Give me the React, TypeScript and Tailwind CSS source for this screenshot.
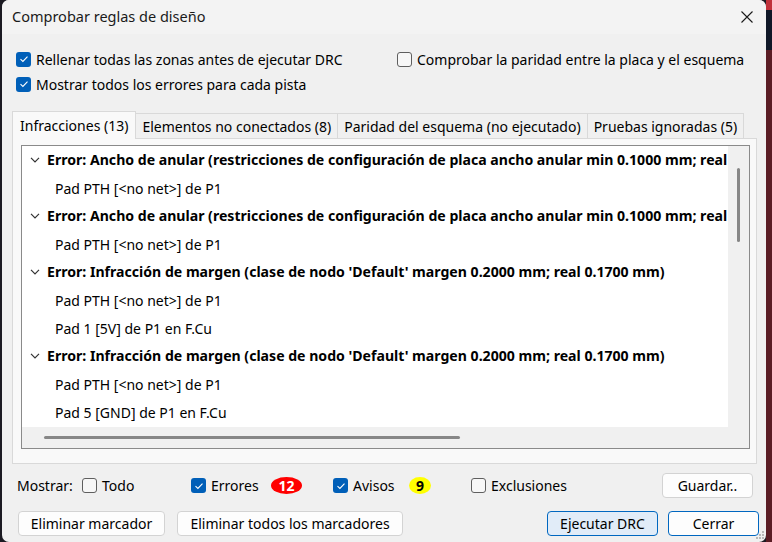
import React from "react";

function Check({ checked }: { checked: boolean }) {
  if (checked) {
    return (
      <span className="w-[15px] h-[15px] rounded-[3px] bg-[#005fb8] flex items-center justify-center shrink-0">
        <svg width="10" height="8" viewBox="0 0 10 8">
          <path d="M1.5 4.2 L3.9 6.4 L8.5 1.6" fill="none" stroke="#ffffff" strokeWidth="1.1" />
        </svg>
      </span>
    );
  }
  return <span className="w-[15px] h-[15px] rounded-[3px] border border-[#5f5f5f] bg-[#f7f7f7] shrink-0" />;
}

function CheckItem({ checked, label }: { checked: boolean; label: string }) {
  return (
    <div className="flex items-center gap-[5px] h-[20px]">
      <Check checked={checked} />
      <span>{label}</span>
    </div>
  );
}

function Chevron() {
  return (
    <svg width="10" height="6" viewBox="0 0 10 6" className="shrink-0">
      <path d="M1 0.8 L5 4.8 L9 0.8" fill="none" stroke="#333333" strokeWidth="1.2" />
    </svg>
  );
}

function ErrRow({ text }: { text: string }) {
  return (
    <div className="h-[28px] flex items-center gap-[7px] pl-[8px] whitespace-nowrap">
      <Chevron />
      <span className="font-bold text-[14.1px]">{text}</span>
    </div>
  );
}

function SubRow({ text }: { text: string }) {
  return <div className="h-[28px] flex items-center pl-[33px] whitespace-nowrap">{text}</div>;
}

function Btn({ label, w, variant }: { label: string; w: string; variant?: "primary" | "focus" }) {
  const base = "h-[25px] rounded-[4px] flex items-center justify-center border ";
  const cls =
    variant === "primary"
      ? "bg-[#e1ecf8] border-[#0067c0]"
      : variant === "focus"
      ? "bg-[#fdfdfd] border-[#0067c0]"
      : "bg-[#fdfdfd] border-[#d3d3d3]";
  return <div className={base + cls + " " + w}>{label}</div>;
}

export default function App() {
  const anular =
    "Error: Ancho de anular (restricciones de configuración de placa ancho anular min 0.1000 mm; real 0.0000 mm)";
  const margen = "Error: Infracción de margen (clase de nodo 'Default' margen 0.2000 mm; real 0.1700 mm)";
  return (
    <div className="w-[772px] h-[542px] flex bg-[#1b1a22] overflow-hidden font-['Noto_Sans',sans-serif] text-[14px] text-black">
      <div className="w-[2px] shrink-0" />
      <div className="w-[764px] h-[542px] shrink-0 bg-[#f0f0f0] rounded-[7px] flex flex-col overflow-hidden relative">
        <div className="h-[34px] bg-[#f3f3f3] flex items-center justify-between pl-[10px] pr-[12px] shrink-0">
          <span className="text-[14.5px] text-[#1a1a1a]">Comprobar reglas de diseño</span>
          <svg width="14" height="14" viewBox="0 0 14 14">
            <path d="M1.5 1.5 L12.5 12.5 M12.5 1.5 L1.5 12.5" stroke="#1a1a1a" strokeWidth="1.1" />
          </svg>
        </div>
        <div className="flex pl-[14px] pt-[15px]">
          <div className="flex flex-col gap-[5px] w-[381px]">
            <CheckItem checked label="Rellenar todas las zonas antes de ejecutar DRC" />
            <CheckItem checked label="Mostrar todos los errores para cada pista" />
          </div>
          <div>
            <CheckItem checked={false} label="Comprobar la paridad entre la placa y el esquema" />
          </div>
        </div>
        <div className="pl-[10px] pt-[17px]">
          <div className="flex items-end h-[27px]">
            <div className="h-[28px] px-[7px] bg-[#f9f9f9] border border-b-0 border-[#d9d9d9] flex items-center relative top-[1px]">
              Infracciones (13)
            </div>
            <div className="h-[25px] px-[6px] bg-[#f0f0f0] border border-l-0 border-b-0 border-[#d9d9d9] flex items-center">
              Elementos no conectados (8)
            </div>
            <div className="h-[25px] px-[6px] bg-[#f0f0f0] border border-l-0 border-b-0 border-[#d9d9d9] flex items-center">
              Paridad del esquema (no ejecutado)
            </div>
            <div className="h-[25px] px-[6px] bg-[#f0f0f0] border border-l-0 border-b-0 border-[#d9d9d9] flex items-center">
              Pruebas ignoradas (5)
            </div>
          </div>
          <div className="w-[745px] h-[326px] bg-[#f9f9f9] border border-[#d9d9d9] pl-[8px] pt-[6px]">
            <div className="w-[729px] h-[304px] border border-[#8a8a8a] bg-white flex flex-col overflow-hidden">
              <div className="flex flex-1 min-h-0">
                <div className="flex-1 overflow-hidden">
                  <ErrRow text={anular} />
                  <SubRow text="Pad PTH [<no net>] de P1" />
                  <ErrRow text={anular} />
                  <SubRow text="Pad PTH [<no net>] de P1" />
                  <ErrRow text={margen} />
                  <SubRow text="Pad PTH [<no net>] de P1" />
                  <SubRow text="Pad 1 [5V] de P1 en F.Cu" />
                  <ErrRow text={margen} />
                  <SubRow text="Pad PTH [<no net>] de P1" />
                  <SubRow text="Pad 5 [GND] de P1 en F.Cu" />
                </div>
                <div className="w-[21px] bg-[#f0f0f0] shrink-0 pt-[22px] flex justify-center">
                  <div className="w-[3px] h-[74px] bg-[#868686] rounded-full" />
                </div>
              </div>
              <div className="h-[21px] bg-[#f0f0f0] shrink-0 flex items-center pl-[22px]">
                <div className="w-[416px] h-[3px] bg-[#868686] rounded-full" />
              </div>
            </div>
          </div>
        </div>
        <div className="flex items-center h-[25px] mt-[9px] pl-[15px]">
          <span className="w-[65px]">Mostrar:</span>
          <div className="w-[109px]">
            <CheckItem checked={false} label="Todo" />
          </div>
          <div className="w-[80px]">
            <CheckItem checked label="Errores" />
          </div>
          <div className="w-[62px]">
            <span className="w-[31px] h-[17px] rounded-[50%] bg-[#ff0000] text-white font-bold flex items-center justify-center text-[14px]">
              12
            </span>
          </div>
          <div className="w-[76px]">
            <CheckItem checked label="Avisos" />
          </div>
          <div className="w-[62px]">
            <span className="w-[22px] h-[17px] rounded-[50%] bg-[#ffff00] text-black font-bold flex items-center justify-center text-[14px]">
              9
            </span>
          </div>
          <div className="w-[191px]">
            <CheckItem checked={false} label="Exclusiones" />
          </div>
          <div className="w-[91px] h-[25px] rounded-[4px] bg-[#fdfdfd] border border-[#d3d3d3] flex items-center justify-center">
            Guardar..
          </div>
        </div>
        <div className="flex items-center mt-[13px] pl-[16px]">
          <Btn label="Eliminar marcador" w="w-[147px]" />
          <div className="w-[12px]" />
          <Btn label="Eliminar todos los marcadores" w="w-[226px]" />
          <div className="w-[144px]" />
          <Btn label="Ejecutar DRC" w="w-[111px]" variant="primary" />
          <div className="w-[10px]" />
          <Btn label="Cerrar" w="w-[91px]" variant="focus" />
        </div>
        <div className="absolute right-[1px] bottom-[2px]">
          <svg width="10" height="10" viewBox="0 0 10 10">
            <rect x="7" y="1" width="2" height="2" fill="#b8b8b8" />
            <rect x="4" y="4" width="2" height="2" fill="#b8b8b8" />
            <rect x="7" y="4" width="2" height="2" fill="#b8b8b8" />
            <rect x="1" y="7" width="2" height="2" fill="#b8b8b8" />
            <rect x="4" y="7" width="2" height="2" fill="#b8b8b8" />
            <rect x="7" y="7" width="2" height="2" fill="#b8b8b8" />
          </svg>
        </div>
      </div>
      <div className="flex-1 bg-[#4a1a22] flex flex-col">
        <div className="h-[10px] bg-[#c0303a]" />
        <div className="h-[40px] bg-[#101828]" />
        <div className="flex-1 bg-[#5a1c24]" />
      </div>
    </div>
  );
}
